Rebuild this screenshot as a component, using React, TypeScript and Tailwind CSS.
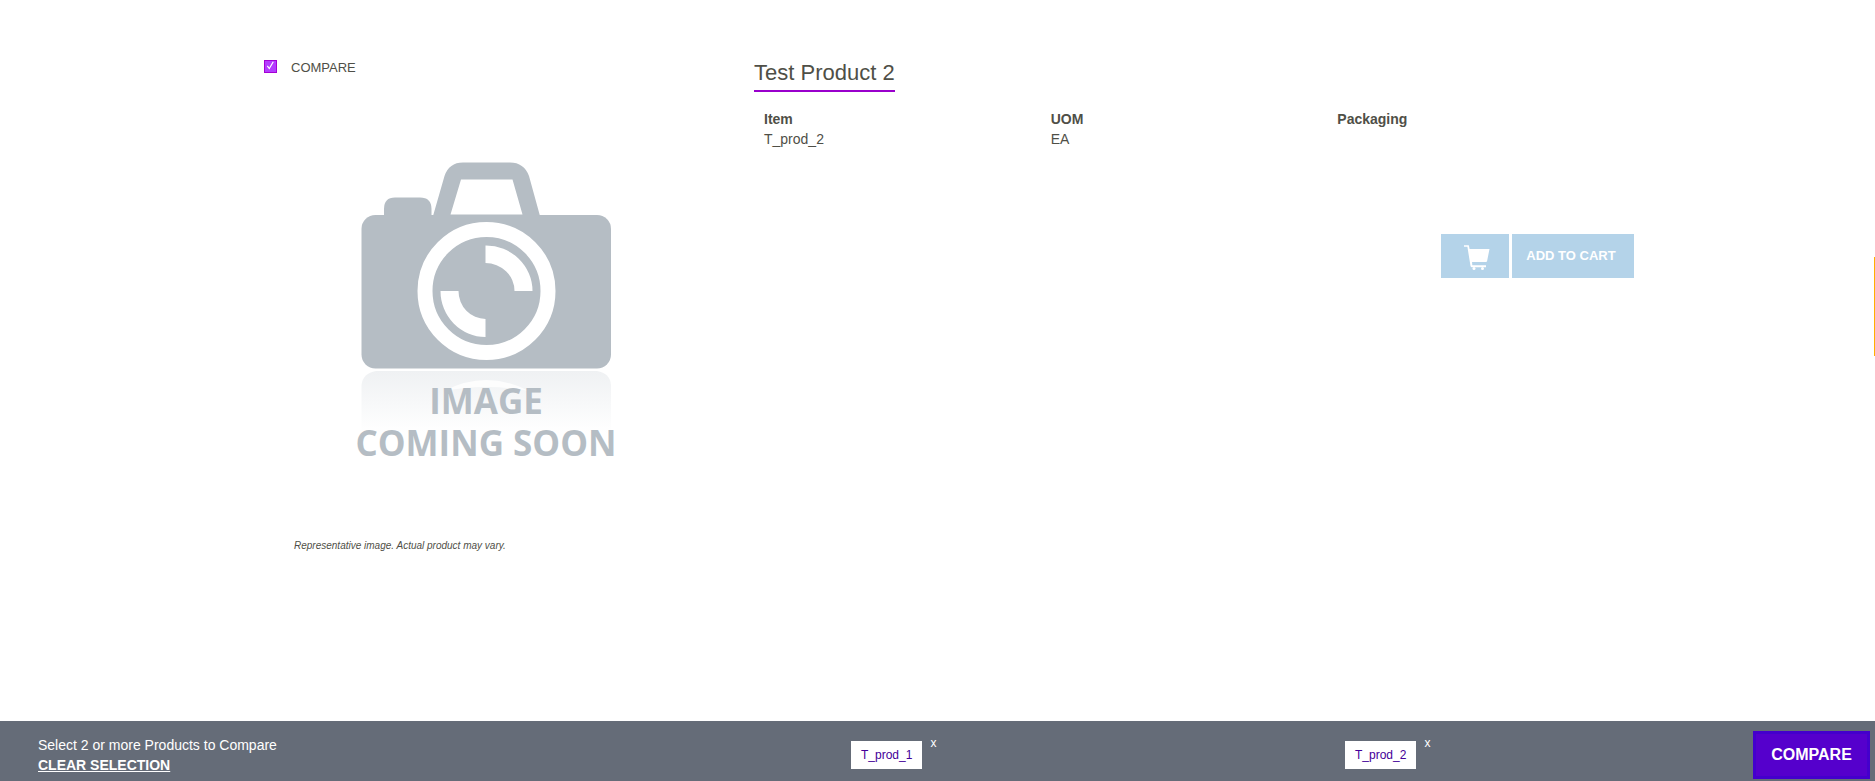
import React from "react";

const details = [
  { label: "Item", value: "T_prod_2" },
  { label: "UOM", value: "EA" },
  { label: "Packaging", value: "" },
];

function PlaceholderImage() {
  return (
    <div className="relative h-[320px] w-[290px]">
      <svg viewBox="0 0 290 320" className="block h-full w-full" aria-hidden="true">
        <defs>
          <linearGradient id="fade" x1="0" y1="0" x2="0" y2="1">
            <stop offset="0" stopColor="#eff1f3" />
            <stop offset="1" stopColor="#ffffff" />
          </linearGradient>
        </defs>
        <path d="M21.500 283V235Q23 223 36 221H257Q270 223 271 235V283Z" fill="url(#fade)" />
        <path d="M104 241Q146 219 189 241Q146 233 104 241Z" fill="#fff" opacity="0.8" />
        <g fill="#b5bdc4">
          <rect x="21.500" y="65" width="249.500" height="153.500" rx="14" />
          <path d="M44 68V59Q44 47.500 55 47.500H80Q91.500 47.500 91.500 59V68Z" />
          <path
            fillRule="evenodd"
            d="M93 66L104.500 26Q109 12.500 123 12.500H170Q184 12.500 189 26L200 66ZM110.500 64.500H182.500L172.500 29.500H121Z"
          />
        </g>
        <circle cx="146.500" cy="141" r="61.500" fill="none" stroke="#fff" strokeWidth="15" />
        <g fill="#fff">
          <path d="M145.500 95.500A46.500 45.500 0 0 1 192.500 141H174.500A29 28 0 0 0 145.500 113Z" />
          <path d="M145.500 187A45 46 0 0 1 100.500 141H118.500A27 28 0 0 0 145.500 169Z" />
        </g>
      </svg>
      <p className="absolute inset-x-0 top-[230px] pl-[2px] text-center font-['Open_Sans',sans-serif] text-[35px] font-bold leading-[42px] text-[#b5bdc4]">
        IMAGE
        <br />
        COMING SOON
      </p>
    </div>
  );
}

function CartIcon() {
  return (
    <svg viewBox="0 0 26 26" className="h-[26px] w-[26px]" fill="#fff" aria-hidden="true">
      <path d="M0 0.300H4.800L5.600 4H25.500L23 16.500H8L8.300 20.300H22V22.300H8Q6.800 22.300 6.500 21L3.400 1.800H0Z" />
      <path d="M22.500 16.500H8" stroke="#fff" strokeWidth="1" />
      <circle cx="10" cy="23.500" r="1.500" />
      <circle cx="18.500" cy="23.500" r="1.500" />
    </svg>
  );
}

function CompareItem({ name }: { name: string }) {
  return (
    <div className="flex items-start">
      <a href="#product" className="mt-2 block bg-white px-[10px] py-[5px] text-[12px] leading-[18px] text-[#440099]">
        {name}
      </a>
      <button type="button" aria-label={`Remove ${name}`} className="ml-2 mt-[2px] text-[12px] leading-4 text-white">
        x
      </button>
    </div>
  );
}

export default function App() {
  return (
    <div className="relative flex min-h-screen flex-col bg-white font-['Liberation_Sans',Arial,sans-serif] text-[14px] leading-5 text-[#4f4f47]">
      <main className="mx-auto grid w-full max-w-[1393px] flex-1 grid-cols-[513px_1fr] pt-[58px]">
        <section className="pl-[23px]">
          <label className="flex items-center text-[13px]">
            <span className="relative mr-[14px] mb-1 h-[13px] w-[13px] shrink-0">
              <input
                type="checkbox"
                defaultChecked
                className="peer block h-[13px] w-[13px] appearance-none border border-[#a400d4] bg-white checked:bg-[#b43cff]"
              />
              <svg
                viewBox="0 0 13 13"
                className="pointer-events-none absolute inset-0 hidden peer-checked:block"
                fill="none"
                stroke="#fff"
                strokeWidth="1.200"
                aria-hidden="true"
              >
                <path d="M3.300 5.800L5.300 8.500L9.300 1.800" />
              </svg>
            </span>
            COMPARE
          </label>
          <div className="mt-[72px] pl-[76px]">
            <PlaceholderImage />
          </div>
          <p className="mt-[66px] pl-[30px] text-[10px] italic">Representative image. Actual product may vary.</p>
        </section>

        <section>
          <h1 className="inline-block border-b-2 border-[#9900cc] pb-[2px] text-[22px] leading-[30px]">Test Product 2</h1>
          <dl className="mt-[17px] grid grid-cols-3 pr-5">
            {details.map((d) => (
              <div key={d.label} className="pl-[10px]">
                <dt className="font-bold">{d.label}</dt>
                <dd>{d.value}</dd>
              </div>
            ))}
          </dl>
          <div className="mt-[85px] flex justify-end gap-[3px]">
            <button type="button" aria-label="Cart" className="flex h-11 w-[68px] items-center justify-center bg-[#b4d3e9] pl-1 pt-1">
              <CartIcon />
            </button>
            <button type="button" className="h-11 w-[122px] bg-[#b4d3e9] pr-1 text-[13px] font-bold text-white">
              ADD TO CART
            </button>
          </div>
        </section>
      </main>

      <div className="absolute right-0 top-[257px] h-[99px] w-px bg-[#ffb000]" />

      <footer className="grid grid-cols-[851fr_494fr_530fr] bg-[#656c78] text-white">
        <div className="pb-[6px] pl-[38px] pt-[14px]">
          <p>Select 2 or more Products to Compare</p>
          <button type="button" className="block font-bold underline">
            CLEAR SELECTION
          </button>
        </div>
        <div className="pt-3">
          <CompareItem name="T_prod_1" />
        </div>
        <div className="flex justify-between pr-[5px]">
          <div className="pt-3">
            <CompareItem name="T_prod_2" />
          </div>
          <button type="button" className="mt-[10px] h-12 w-[117px] border-3 border-[#4400cc] bg-[#5500cc] text-[16px] font-bold">
            COMPARE
          </button>
        </div>
      </footer>
    </div>
  );
}
